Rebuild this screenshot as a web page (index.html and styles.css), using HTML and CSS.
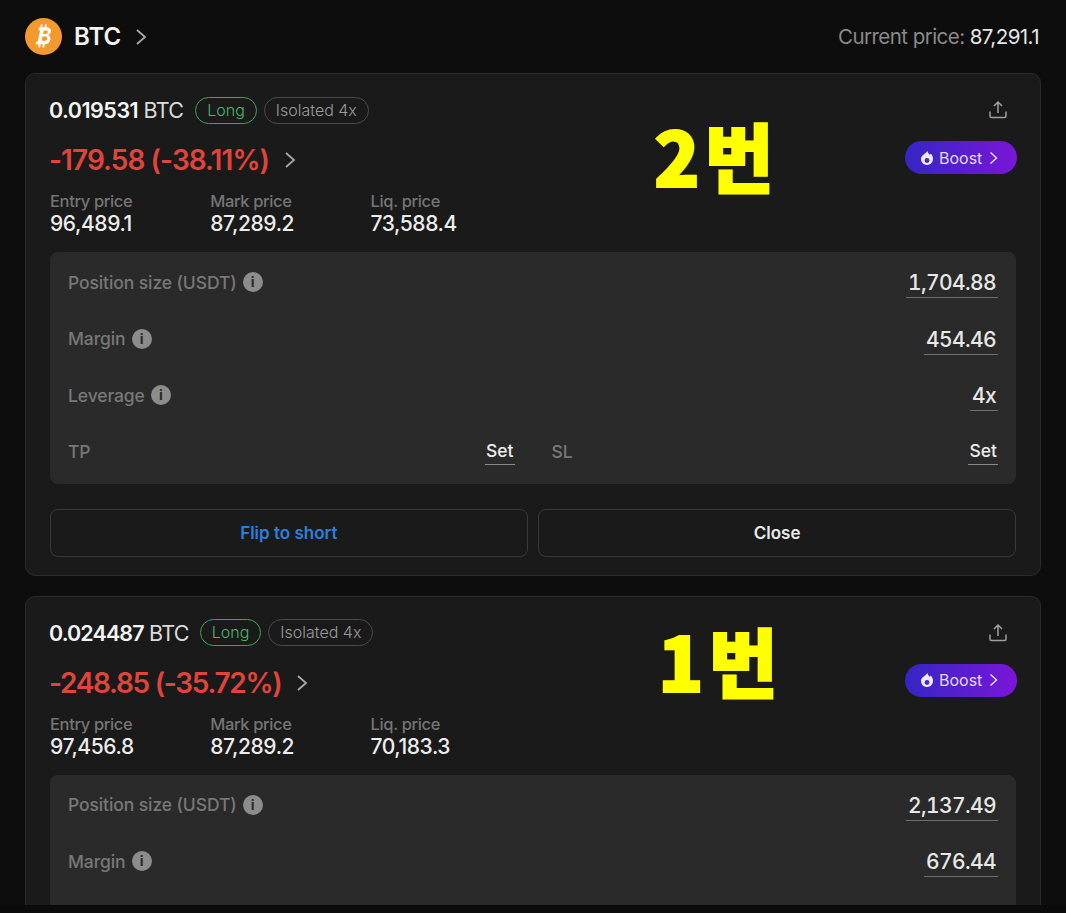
FILE: index.html
```html
<!DOCTYPE html>
<html lang="ko">
<head>
    <meta charset="UTF-8">
    <meta name="viewport" content="width=device-width, initial-scale=1.0">
    <title>BTC positions</title>
    <link rel="stylesheet" href="styles.css">
</head>
<body>
    <div class="page">
        <header class="top">
            <div class="coin">
                <svg class="coin-logo" width="37" height="37" viewBox="0 0 37 37">
                    <circle cx="18.5" cy="18.5" r="18.5" fill="#f39a2f"/>
                    <g transform="translate(18.5 18.5) scale(1.15) translate(-18.5 -18.5)">
                        <path d="M14.5 10.5h6.2c3 0 4.6 1.5 4.2 3.9-.3 1.6-1.2 2.6-2.6 3 1.7.5 2.5 1.8 2.2 3.6-.5 2.7-2.4 4.300-5.600 4.300h-7.400l.9-2.500h1.200l1.900-9.800h-1.400z M18.700 13.300l-.6 3h2.300c1 0 1.600-.5 1.800-1.500.1-.9-.3-1.500-1.300-1.500z M17.600 18.600l-.7 3.700h2.700c1.200 0 1.900-.6 2.100-1.800.2-1.200-.4-1.900-1.600-1.900z" fill="#fff" fill-rule="evenodd"/>
                        <path d="M17 8l-.5 3M20.600 8l-.5 3M15.200 25l-.5 3M18.800 25l-.5 3" stroke="#fff" stroke-width="1.600" fill="none"/>
                    </g>
                </svg>
                <span class="coin-name">BTC</span>
                <svg class="chev" width="12" height="18" viewBox="0 0 12 18"><path d="M2 2l8 7-8 7"/></svg>
            </div>
            <div class="current">Current price: <span class="current-val">87,291.1</span></div>
        </header>

        <section class="card">
            <div class="label-big label-two">2번</div>
            <div class="card-head">
                <div>
                    <div class="size-row">
                        <span class="amount"><b>0.019531</b> BTC</span>
                        <span class="tag tag-long">Long</span>
                        <span class="tag tag-mode">Isolated 4x</span>
                    </div>
                    <div class="pnl-row">
                        <span class="pnl">-179.58 (-38.11%)</span>
                        <svg class="chev" width="12" height="18" viewBox="0 0 12 18"><path d="M2 2l8 7-8 7"/></svg>
                    </div>
                </div>
                <div class="head-right">
                    <svg class="share" width="20" height="20" viewBox="0 0 20 20"><path d="M10 13V2.500M6 6l4-4 4 4M2 11.500v4.500c0 1 .7 1.500 1.500 1.500h13c.8 0 1.500-.5 1.500-1.500v-4.500"/></svg>
                    <span class="boost">
                        <svg width="14" height="14" viewBox="0 0 14 14"><path d="M7.500 0c.3 2 1.300 2.800 2.400 3.900.4-.4.600-.9.700-1.400C12.100 3.800 13 5.600 13 7.800 13 11.200 10.400 14 7 14S1 11.200 1 7.800C1 4.500 4.800 3.400 7.500 0z" fill="#efe9ff"/><circle cx="7" cy="9.500" r="2.400" fill="#4a27c9"/></svg>
                        Boost
                        <svg class="chev-sm" width="9" height="14" viewBox="0 0 9 14"><path d="M1.500 1.500l6 5.500-6 5.500"/></svg>
                    </span>
                </div>
            </div>
            <div class="prices">
                <div class="price"><div class="price-name">Entry price</div><div class="price-val">96,489.1</div></div>
                <div class="price"><div class="price-name">Mark price</div><div class="price-val">87,289.2</div></div>
                <div class="price"><div class="price-name">Liq. price</div><div class="price-val">73,588.4</div></div>
            </div>
            <div class="panel">
                <div class="row">
                    <span class="row-name">Position size (USDT) <i class="info">i</i></span>
                    <span class="row-val">1,704.88</span>
                </div>
                <div class="row">
                    <span class="row-name">Margin <i class="info">i</i></span>
                    <span class="row-val">454.46</span>
                </div>
                <div class="row">
                    <span class="row-name">Leverage <i class="info">i</i></span>
                    <span class="row-val">4x</span>
                </div>
                <div class="row tpsl">
                    <div class="half"><span class="row-name">TP</span><span class="set">Set</span></div>
                    <div class="half"><span class="row-name">SL</span><span class="set">Set</span></div>
                </div>
            </div>
            <div class="buttons">
                <button class="btn btn-flip">Flip to short</button>
                <button class="btn">Close</button>
            </div>
        </section>

        <section class="card card-alt">
            <div class="label-big label-one">1번</div>
            <div class="card-head">
                <div>
                    <div class="size-row">
                        <span class="amount"><b>0.024487</b> BTC</span>
                        <span class="tag tag-long">Long</span>
                        <span class="tag tag-mode">Isolated 4x</span>
                    </div>
                    <div class="pnl-row">
                        <span class="pnl">-248.85 (-35.72%)</span>
                        <svg class="chev" width="12" height="18" viewBox="0 0 12 18"><path d="M2 2l8 7-8 7"/></svg>
                    </div>
                </div>
                <div class="head-right">
                    <svg class="share" width="20" height="20" viewBox="0 0 20 20"><path d="M10 13V2.500M6 6l4-4 4 4M2 11.500v4.500c0 1 .7 1.500 1.500 1.500h13c.8 0 1.500-.5 1.500-1.500v-4.500"/></svg>
                    <span class="boost">
                        <svg width="14" height="14" viewBox="0 0 14 14"><path d="M7.500 0c.3 2 1.300 2.800 2.400 3.900.4-.4.600-.9.700-1.400C12.100 3.800 13 5.600 13 7.800 13 11.200 10.400 14 7 14S1 11.200 1 7.800C1 4.500 4.800 3.400 7.500 0z" fill="#efe9ff"/><circle cx="7" cy="9.500" r="2.400" fill="#4a27c9"/></svg>
                        Boost
                        <svg class="chev-sm" width="9" height="14" viewBox="0 0 9 14"><path d="M1.500 1.500l6 5.500-6 5.500"/></svg>
                    </span>
                </div>
            </div>
            <div class="prices">
                <div class="price"><div class="price-name">Entry price</div><div class="price-val">97,456.8</div></div>
                <div class="price"><div class="price-name">Mark price</div><div class="price-val">87,289.2</div></div>
                <div class="price"><div class="price-name">Liq. price</div><div class="price-val">70,183.3</div></div>
            </div>
            <div class="panel">
                <div class="row">
                    <span class="row-name">Position size (USDT) <i class="info">i</i></span>
                    <span class="row-val">2,137.49</span>
                </div>
                <div class="row">
                    <span class="row-name">Margin <i class="info">i</i></span>
                    <span class="row-val">676.44</span>
                </div>
            </div>
        </section>
    </div>
</body>
</html>
```

FILE: styles.css
```css
html, body {
    margin: 0;
    height: 100%;
    overflow: hidden;
    background: #0b0b0b;
}

body {
    font-family: Inter, "Noto Sans", sans-serif;
    color: #f2f2f2;
}

.page {
    height: 905px;
    overflow: hidden;
    box-sizing: border-box;
    padding: 0 25px;
    background: #0d0d0d;
}

.top {
    height: 73px;
    display: flex;
    align-items: center;
    justify-content: space-between;
}

.coin {
    display: flex;
    align-items: center;
}

.coin-logo {
    margin-right: 12px;
}

.coin-name {
    font-size: 24px;
    font-weight: 600;
    margin-right: 14px;
}

.chev {
    fill: none;
    stroke: #a8a8a8;
    stroke-width: 1.8;
}

.current {
    font-size: 20.5px;
    letter-spacing: -0.55px;
    color: #8a8a8a;
    margin-right: 2px;
}

.current-val {
    color: #e6e6e6;
}

.card {
    position: relative;
    box-sizing: border-box;
    height: 502.500px;
    margin-bottom: 20px;
    padding: 22px 24px 18px;
    background: #1a1a1a;
    border: 1px solid #2b2b2b;
    border-radius: 10px;
}

.label-big {
    position: absolute;
    font-family: "Noto Sans CJK KR", sans-serif;
    font-size: 75px;
    line-height: 96px;
    font-weight: 900;
    letter-spacing: 5px;
    color: #ffff00;
    -webkit-text-stroke: 2px #ffff00;
}

.label-two {
    top: 33px;
    left: 628px;
}

.label-one {
    top: 15px;
    left: 632px;
}

.card-head {
    display: flex;
    justify-content: space-between;
    height: 96px;
}

.size-row {
    display: flex;
    align-items: center;
    height: 28px;
    margin-left: -1px;
}

.amount {
    font-size: 21.5px;
    letter-spacing: -0.7px;
    color: #dcdcdc;
    margin-right: 12px;
}

.amount b {
    font-weight: 600;
    letter-spacing: -0.5px;
    color: #f5f5f5;
}

.card-alt .amount {
    margin-right: 11px;
}

.card-alt .amount b {
    letter-spacing: -0.9px;
}

.tag {
    box-sizing: border-box;
    height: 27px;
    line-height: 25px;
    padding: 0 11px;
    border-radius: 14px;
    font-size: 16px;
    font-weight: 300;
    border: 1px solid #4a4a4a;
    color: #9a9a9a;
    margin-right: 7px;
}

.tag-long {
    border-color: #3fa35a;
    color: #4cb56c;
}

.pnl-row {
    display: flex;
    align-items: center;
    margin-top: 19px;
    margin-left: -1px;
}

.pnl {
    font-size: 28px;
    font-weight: 600;
    letter-spacing: -0.95px;
    color: #e0443a;
    margin-right: 15px;
}

.card-alt .pnl {
    letter-spacing: -1.3px;
}

.head-right {
    display: flex;
    flex-direction: column;
    align-items: flex-end;
    margin-right: -1px;
}

.share {
    fill: none;
    stroke: #a0a0a0;
    stroke-width: 1.5;
    margin: 4px 9px 21px 0;
}

.boost {
    box-sizing: border-box;
    width: 112px;
    height: 33px;
    padding-left: 15px;
    display: flex;
    align-items: center;
    gap: 5px;
    border-radius: 17px;
    background: linear-gradient(90deg, #3426c4, #7a16d8);
    font-size: 16px;
    color: #e4dcff;
}

.chev-sm {
    fill: none;
    stroke: #e4dcff;
    stroke-width: 1.500;
    margin-left: 2px;
}

.prices {
    display: flex;
}

.price {
    width: 160.250px;
}

.price-name {
    font-size: 16.5px;
    line-height: 19px;
    font-weight: 500;
    letter-spacing: -0.35px;
    color: #757575;
}

.price-val {
    font-size: 21px;
    line-height: 25px;
    font-weight: 500;
    letter-spacing: -0.4px;
    color: #ededed;
}

.panel {
    margin-top: 16px;
    padding: 2px 18px;
    height: 232px;
    box-sizing: border-box;
    background: #2a2a2a;
    border-radius: 8px;
}

.row {
    height: 56.500px;
    display: flex;
    align-items: center;
    justify-content: space-between;
}

.row-name {
    display: flex;
    align-items: center;
    gap: 6px;
    font-size: 17.5px;
    font-weight: 500;
    letter-spacing: -0.1px;
    color: #787878;
}

.info {
    width: 20px;
    height: 20px;
    border-radius: 50%;
    background: #8c8c8c;
    color: #2a2a2a;
    font-size: 14px;
    font-weight: 700;
    font-style: normal;
    line-height: 20px;
    text-align: center;
}

.row-val {
    margin-top: 2px;
    padding: 0 2px;
    font-size: 21px;
    font-weight: 500;
    font-variant-numeric: tabular-nums;
    letter-spacing: -0.6px;
    line-height: 29px;
    color: #e8e8e8;
    border-bottom: 1px solid #6e6e6e;
}

.tpsl {
    gap: 37px;
}

.half {
    flex: 1;
    display: flex;
    align-items: center;
    justify-content: space-between;
}

.set {
    padding: 0 1px;
    font-size: 17.5px;
    font-weight: 500;
    line-height: 26px;
    color: #ededed;
    border-bottom: 1px solid #8a8a8a;
}

.buttons {
    display: flex;
    gap: 10.5px;
    margin-top: 25px;
}

.btn {
    flex: 1;
    height: 48px;
    background: transparent;
    border: 1.500px solid #3a3a3a;
    border-radius: 8px;
    font-family: inherit;
    font-size: 17px;
    font-weight: 600;
    color: #eaeaea;
}

.btn-flip {
    color: #2a7fe0;
}
```
